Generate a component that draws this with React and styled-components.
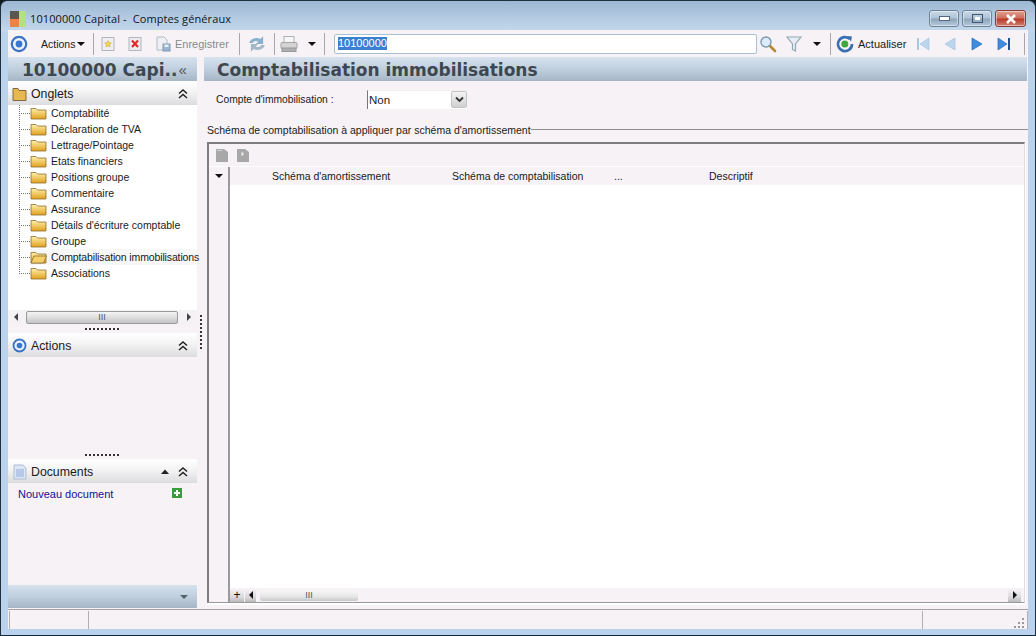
import React from 'react';
import styled, { createGlobalStyle } from 'styled-components';

const GlobalStyle = createGlobalStyle`
  html, body { margin: 0; padding: 0; background: #0d1a22; }
  body { font-family: "Liberation Sans", Arial, sans-serif; font-size: 10.5px; color: #1a1a1a; }
  * { box-sizing: border-box; }
  svg { flex: none; }
`;

const Window = styled.div`
  width: 1036px;
  height: 636px;
  display: flex;
  flex-direction: column;
  overflow: hidden;
  border-radius: 7px 7px 0 0;
  border: 1px solid #20303c;
  border-bottom: 1px solid #102a38;
  background: linear-gradient(to bottom, #9db8d4 0, #c4d8ec 30px, #bcd3ec 31px, #bad2ee 100%);
`;

const TitleBar = styled.div`
  height: 29px;
  flex: none;
  display: flex;
  align-items: center;
  padding: 0 8px 0 9px;
`;

const AppLogo = styled.div`
  width: 16px;
  height: 16px;
  margin-top: 6px;
  display: grid;
  grid-template-columns: 9px 7px;
  grid-template-rows: 8px 8px;
  background: #b4e084;
  > i:nth-child(1) { background: #59564f; }
  > i:nth-child(2) { background: #b4e084; grid-row: span 2; }
  > i:nth-child(3) { background: #ec8248; }
`;

const TitleText = styled.div`
  margin-left: 4px;
  margin-top: 6px;
  font-family: "Open Sans", sans-serif;
  font-size: 11px;
  letter-spacing: 0.1px;
  white-space: pre;
  color: #101418;
`;

const WindowButtons = styled.div`
  margin-left: auto;
  display: flex;
  gap: 3px;
  margin-top: 6px;
  margin-right: 1px;
`;

const WindowButton = styled.div`
  width: ${p => (p.$close ? 31 : 30)}px;
  height: 17px;
  display: flex;
  align-items: center;
  justify-content: center;
  border: 1px solid ${p => (p.$close ? '#8a3a30' : '#6f8398')};
  border-radius: 3px;
  background: ${p => (p.$close
    ? 'linear-gradient(to bottom, #e4a090 0, #d07060 45%, #b83c28 55%, #d08070 100%)'
    : 'linear-gradient(to bottom, #c8d8e8 0, #b0c4d8 45%, #8ea6bc 55%, #b4c8dc 100%)')};
  box-shadow: inset 0 0 0 1px rgba(255, 255, 255, 0.45);
`;

const Toolbar = styled.div`
  height: 26px;
  flex: none;
  margin: 0 7px;
  padding-top: 1px;
  display: flex;
  align-items: center;
  background: #f6f2f6;
`;

const Slot = styled.div`
  width: ${p => p.$w}px;
  flex: none;
  height: 100%;
  display: flex;
  align-items: center;
  justify-content: ${p => p.$start ? 'flex-start' : 'center'};
  padding-left: ${p => p.$pad || 0}px;
  gap: ${p => p.$gap || 0}px;
  color: ${p => p.$muted ? '#8a8a8a' : '#1a1a1a'};
  font-size: ${p => p.$fs || 11}px;
  white-space: nowrap;
`;

const Sep = styled.div`
  width: 1px;
  height: 22px;
  flex: none;
  background: #a4a8ac;
`;

const Caret = styled.span`
  display: inline-block;
  width: 0;
  height: 0;
  border-left: 4px solid transparent;
  border-right: 4px solid transparent;
  border-top: 4px solid #111;
  margin-left: ${p => p.$ml || 0}px;
`;

const SearchInput = styled.div`
  width: 423px;
  height: 20px;
  margin-left: 9px;
  flex: none;
  display: flex;
  align-items: center;
  padding-left: 3px;
  background: #fff;
  border: 1px solid #a8c0d4;
  border-radius: 2px;
  > span { background: #3a7fd0; color: #fff; line-height: 13px; font-size: 11px; }
`;

const Body = styled.div`
  flex: 1;
  min-height: 0;
  margin: 0 7px;
  display: flex;
  background: #f6f2f6;
`;

const Sidebar = styled.aside`
  width: 189px;
  flex: none;
  display: flex;
  flex-direction: column;
`;

const Banner = styled.div`
  height: 24px;
  flex: none;
  margin-top: 1px;
  margin-right: ${p => p.$mr || 0}px;
  padding-top: 1px;
  display: flex;
  align-items: center;
  background: linear-gradient(to bottom, #d6e2ee 0, #c0cfde 50%, #a6b6c6 100%);
`;

const BannerTitle = styled.div`
  font-family: "DejaVu Sans", Verdana, sans-serif;
  font-weight: bold;
  font-size: 17px;
  color: #3d4750;
  white-space: nowrap;
  padding-left: ${p => p.$pad}px;
`;

const Chevrons = styled.span`
  font-size: 15px;
  line-height: 15px;
  color: #555;
  margin-left: 1px;
`;

const SectionHead = styled.div`
  height: 24px;
  flex: none;
  display: flex;
  align-items: center;
  padding: 1px 0 0 4px;
  gap: 4px;
  font-size: 12.3px;
  background: linear-gradient(to bottom, #ffffff 0, #f6f5f6 40%, #dcdcde 100%);
`;

const HeadEnd = styled.div`
  margin-left: auto;
  display: flex;
  align-items: center;
  gap: 9px;
  padding-right: 9px;
`;

const Tree = styled.div`
  height: 205px;
  flex: none;
  background: #fff;
  padding: 0 0 0 11px;
`;

const TreeRow = styled.div`
  height: 16px;
  display: flex;
  align-items: center;
  white-space: nowrap;
  font-size: 10.5px;
  background: ${p => p.$active ? 'linear-gradient(to right, transparent 11px, #f8f7f8 11px)' : 'none'};
`;

const Connector = styled.span`
  width: 11px;
  height: 16px;
  flex: none;
  align-self: flex-start;
  background:
    repeating-linear-gradient(to bottom, #777 0 1px, transparent 1px 2px) 0 0 / 1px ${p => p.$last ? '8px' : '16px'} no-repeat,
    repeating-linear-gradient(to right, #777 0 1px, transparent 1px 2px) 0 8px / 11px 1px no-repeat;
`;

const TreeLabel = styled.span`
  margin-left: 4px;
  flex: none;
  letter-spacing: ${p => p.$tight ? '-0.13px' : 'normal'};
`;

const HScroll = styled.div`
  height: 14px;
  flex: none;
  display: flex;
  align-items: center;
  background: #f4f2f4;
`;

const Thumb = styled.div`
  height: 13px;
  border: 1px solid #9a9a9a;
  border-radius: 2px;
  display: flex;
  align-items: center;
  justify-content: center;
  font-size: 9px;
  color: #555;
  background: linear-gradient(to bottom, #f4f4f4 0, #dedede 50%, #c4c4c4 100%);
  width: 152px;
  margin: 0 9px 0 8px;
`;

const Arrow = styled.span`
  width: 0;
  height: 0;
  border-top: 4px solid transparent;
  border-bottom: 4px solid transparent;
  ${p => p.$dir === 'left'
    ? `border-right: 4px solid ${p.$c || '#444'};`
    : `border-left: 4px solid ${p.$c || '#444'};`}
`;

const Grip = styled.div`
  height: ${p => p.$h}px;
  flex: none;
  display: flex;
  align-items: center;
  justify-content: center;
  &::after {
    content: "";
    width: 36px;
    height: 2px;
    background: repeating-linear-gradient(to right, #333 0 2px, transparent 2px 4px);
  }
`;

const PaneSpace = styled.div`
  height: ${p => p.$h}px;
  flex: none;
`;

const DocRow = styled.div`
  flex: 1;
  display: flex;
  justify-content: space-between;
  padding: 5px 15px 0 10px;
  color: #10109a;
  font-size: 11px;
`;

const SidebarFoot = styled.div`
  height: 23px;
  flex: none;
  margin-bottom: 1px;
  display: flex;
  align-items: center;
  justify-content: flex-end;
  padding-right: 9px;
  background: linear-gradient(to bottom, #d6e2ee 0, #c0cfde 50%, #a6b6c6 100%);
`;

const DownTri = styled.span`
  width: 0;
  height: 0;
  border-left: 4px solid transparent;
  border-right: 4px solid transparent;
  border-top: 4px solid #555f68;
`;

const Gutter = styled.div`
  width: 7px;
  flex: none;
  padding-top: 259px;
  padding-left: 3px;
  &::after {
    content: "";
    display: block;
    width: 2px;
    height: 36px;
    background: repeating-linear-gradient(to bottom, #333 0 2px, transparent 2px 4px);
  }
`;

const Main = styled.main`
  flex: 1;
  min-width: 0;
  display: flex;
  flex-direction: column;
`;

const FormRow = styled.div`
  height: 36px;
  flex: none;
  display: flex;
  align-items: center;
  padding: 0 0 0 12px;
  font-size: 10.3px;
`;

const FormLabel = styled.label`
  width: 151px;
`;

const Select = styled.div`
  width: 100px;
  height: 19px;
  display: flex;
  align-items: center;
  justify-content: space-between;
  padding-left: 1px;
  background: #fff;
  border-left: 1px solid #777;
  border-top: 1px solid #eee;
  > span:first-child { font-size: 11.5px; }
`;

const SelectBtn = styled.span`
  width: 16px;
  height: 17px;
  display: flex;
  align-items: center;
  justify-content: center;
  border: 1px solid #c4c4c4;
  border-radius: 2px;
  background: linear-gradient(to bottom, #f4f4f4, #d0d0d0);
`;

const Group = styled.div`
  height: 23px;
  flex: none;
  padding-left: 3px;
  display: flex;
  align-items: center;
  font-size: 10.5px;
  white-space: nowrap;
  margin-top: 1px;
  &::after {
    content: "";
    flex: 1;
    height: 1px;
    background: #8e8e8e;
  }
`;

const Grid = styled.div`
  flex: 1;
  min-height: 0;
  margin: 1px 3px 6px 3px;
  border-top: 2px solid #7d7d7d;
  border-left: 2px solid #7d7d7d;
  border-bottom: 1px solid #9a9a9a;
  border-right: 1px solid #dcdcdc;
  box-shadow: 0 2px 0 #fff, 1px 0 0 #fff;
  display: flex;
  flex-direction: column;
`;

const GridTools = styled.div`
  height: 23px;
  flex: none;
  display: flex;
  align-items: center;
  padding-left: 6px;
  gap: 7px;
  border-bottom: 1px solid #fff;
`;

const GridHead = styled.div`
  height: 18px;
  flex: none;
  display: flex;
  align-items: center;
  font-size: 10.5px;
`;

const Corner = styled.div`
  width: 21px;
  height: 100%;
  flex: none;
  border-right: 2px solid #9a9a9a;
  display: flex;
  align-items: center;
  padding-left: 6px;
`;

const Col = styled.div`
  width: ${p => p.$w}px;
  flex: none;
  white-space: nowrap;
`;

const GridBody = styled.div`
  flex: 1;
  min-height: 0;
  display: flex;
`;

const RowGutter = styled.div`
  width: 21px;
  height: 100%;
  flex: none;
  border-right: 2px solid #9a9a9a;
`;

const Cells = styled.div`
  flex: 1;
  background: #fff;
`;

const GridFoot = styled.div`
  height: 14px;
  flex: none;
  display: flex;
  align-items: center;
`;

const FootBtn = styled.div`
  width: ${p => p.$w}px;
  margin-left: ${p => p.$ml || 0}px;
  height: 13px;
  flex: none;
  display: flex;
  align-items: center;
  justify-content: center;
  font-size: 12px;
  color: #111;
  background: linear-gradient(to bottom, #f6f2f6 0, #dcdadc 60%, #bcbcbc 100%);
`;

const FootThumb = styled.div`
  width: 98px;
  height: 11px;
  margin-left: 4px;
  border-radius: 2px;
  display: flex;
  align-items: center;
  justify-content: center;
  font-size: 9px;
  color: #555;
  background: linear-gradient(to bottom, #f8f8f8 0, #e6e6e6 60%, #c8c8c8 100%);
`;

const StatusBar = styled.div`
  height: 20px;
  flex: none;
  margin: 0 7px;
  padding: 1px 0 0 1px;
  display: flex;
  background: #f6f2f6;
  border-top: 1px solid #a4a4a4;
  position: relative;
`;

const StatusCell = styled.div`
  width: ${p => p.$w ? `${p.$w}px` : 'auto'};
  flex: ${p => p.$w ? 'none' : 1};
  border-left: 1px solid ${p => p.$first ? '#b0b0b0' : '#f6f2f6'};
  border-right: 1px solid #b0b0b0;
  &:last-child { border-right: 0; }
`;

const ResizeGrip = styled.div`
  position: absolute;
  right: 4px;
  bottom: 1px;
  width: 10px;
  height: 10px;
  line-height: 0;
`;

const BottomFrame = styled.div`
  height: 6px;
  flex: none;
`;

const Folder = ({ open }) => (
  <svg width="17" height="14" viewBox="0 0 17 14">
    <defs>
      <linearGradient id="fy" x1="0" y1="0" x2="0" y2="1">
        <stop offset="0" stopColor="#fff0a8" />
        <stop offset="1" stopColor="#e0a020" />
      </linearGradient>
    </defs>
    <path d="M1 2.5h5l1.5 1.5H16v9H1z" fill="url(#fy)" stroke="#8c7030" strokeWidth="0.8" />
    {open && <path d="M1 13l3-7h12.5l-3 7z" fill="#f6cf68" stroke="#8c7030" strokeWidth="0.8" />}
  </svg>
);

const BigFolder = () => (
  <svg width="15" height="14" viewBox="0 0 15 14">
    <path d="M1 1.5h5l1 2h7v10H1z" fill="#e8b850" stroke="#806840" strokeWidth="1" />
  </svg>
);

const Target = ({ size = 18 }) => (
  <svg width={size} height={size} viewBox="0 0 18 18">
    <circle cx="9" cy="9" r="7.2" fill="#eef2fa" stroke="#3b74c4" strokeWidth="2.2" />
    <circle cx="9" cy="9" r="3.4" fill="#3a78d0" />
  </svg>
);

const DocStar = () => (
  <svg width="16" height="16" viewBox="0 0 16 16">
    <rect x="2" y="1.5" width="12" height="13" fill="#eeeef2" stroke="#b4b4bc" />
    <path d="M8 4.5l1 2.2 2.4.3-1.8 1.6.5 2.4L8 9.8l-2.1 1.2.5-2.4L4.6 7l2.4-.3z" fill="#f2d84c" stroke="#c8a030" strokeWidth=".5" />
  </svg>
);

const DocCross = () => (
  <svg width="16" height="16" viewBox="0 0 16 16">
    <rect x="2" y="1.5" width="12" height="13" fill="#ececf0" stroke="#b4b4bc" />
    <path d="M5 4.5l6 6.5M11 4.5l-6 6.5" stroke="#dc2c2c" strokeWidth="2.2" />
  </svg>
);

const DocSave = () => (
  <svg width="16" height="16" viewBox="0 0 16 16">
    <path d="M2 1h7l3 3v10H2z" fill="#eef0f4" stroke="#b4bcc8" />
    <rect x="8" y="8" width="7" height="7" fill="#9cb4d4" stroke="#8098b8" />
    <rect x="9.5" y="8.5" width="4" height="2.5" fill="#e8eef6" />
  </svg>
);

const Refresh = () => (
  <svg width="20" height="20" viewBox="0 0 18 18">
    <path d="M2 8a6.5 5.5 0 0 1 10-3.5L14.5 2v7H8l2.2-2.2A3.6 3.2 0 0 0 5 8z" fill="#8ab0d0" />
    <path d="M16 10a6.5 5.5 0 0 1-10 3.5L3.5 16V9H10l-2.2 2.2A3.6 3.2 0 0 0 13 10z" fill="#a4b8c8" />
  </svg>
);

const Printer = () => (
  <svg width="20" height="18" viewBox="0 0 20 18">
    <rect x="5" y="1.5" width="10" height="6" fill="#f6f6f6" stroke="#b0b0b0" />
    <rect x="2" y="7.5" width="16" height="6" rx="1" fill="#d4d4d4" stroke="#a4a4a4" />
    <rect x="3" y="13" width="14" height="3.5" fill="#b0b0b0" stroke="#989898" />
  </svg>
);

const Lens = () => (
  <svg width="18" height="18" viewBox="0 0 18 18">
    <path d="M10.5 10.5l5.5 5.5" stroke="#b88a30" strokeWidth="2.6" strokeLinecap="round" />
    <circle cx="7" cy="7" r="5" fill="#dcecfa" stroke="#7d98b0" strokeWidth="1.4" />
  </svg>
);

const Funnel = () => (
  <svg width="16" height="18" viewBox="0 0 16 18">
    <path d="M1 2h14l-5.5 7v7l-3-1.5V9z" fill="#e6eef4" stroke="#92a8b8" strokeWidth="1.2" />
  </svg>
);

const GreenRefresh = () => (
  <svg width="18" height="18" viewBox="0 0 18 18">
    <path d="M14 4.2A7 7 0 1 0 16 9" fill="none" stroke="#3c70b0" strokeWidth="2.6" />
    <path d="M11 1l5 .5-1 5z" fill="#3c70b0" />
    <circle cx="8.8" cy="9" r="3.5" fill="#40a840" />
  </svg>
);

const Nav = ({ d, bar, c }) => (
  <svg width="16" height="16" viewBox="0 0 16 16">
    <path d={d} fill={c} stroke={c === '#bcd6ee' ? '#a4c4e0' : '#2a68b8'} strokeWidth="0.7" />
    {bar && <rect x={bar} y="2" width="2" height="12" fill={c === '#bcd6ee' ? '#a8c8e4' : '#1d4f9c'} />}
  </svg>
);

const DoubleUp = () => (
  <svg width="10" height="10" viewBox="0 0 10 10">
    <path d="M1 4.5L5 1l4 3.5M1 9L5 5.5 9 9" fill="none" stroke="#222" strokeWidth="1.5" />
  </svg>
);

const SingleUp = () => (
  <svg width="8" height="5" viewBox="0 0 8 5">
    <path d="M0 5l4-4.5L8 5z" fill="#222" />
  </svg>
);

const DocIcon = () => (
  <svg width="15" height="16" viewBox="0 0 15 16">
    <path d="M2 1h9l3 3v11H2z" fill="#dce6f6" stroke="#aebcd4" />
    <path d="M4 6h8M4 8h8M4 10h8M4 12h8" stroke="#90a8d8" />
  </svg>
);

const GreenPlus = () => (
  <svg width="10" height="10" viewBox="0 0 10 10">
    <rect width="10" height="10" fill="#3c9c3c" />
    <path d="M5 2v6M2 5h6" stroke="#fff" strokeWidth="2" />
  </svg>
);

const GreyDoc = ({ plus }) => (
  <svg width="14" height="15" viewBox="0 0 14 15">
    <path d="M1 1h8l4 3v10H1z" fill="#a8a8a8" />
    {plus && <path d="M6 4l2 2-2 2-1-1 1-1-1-1z" fill="#f0f0f0" />}
    {!plus && <path d="M2 2h5v1H2z" fill="#d0d0d0" />}
  </svg>
);

const SelectArrow = () => (
  <svg width="9" height="7" viewBox="0 0 9 7">
    <path d="M1 1.5l3.5 3.5L8 1.5" fill="none" stroke="#333" strokeWidth="1.8" />
  </svg>
);

const GripDots = () => (
  <svg width="10" height="10" viewBox="0 0 10 10">
    <g fill="#9a9a9a">
      <rect x="8" y="0" width="2" height="2" />
      <rect x="4" y="4" width="2" height="2" />
      <rect x="8" y="4" width="2" height="2" />
      <rect x="0" y="8" width="2" height="2" />
      <rect x="4" y="8" width="2" height="2" />
      <rect x="8" y="8" width="2" height="2" />
    </g>
  </svg>
);

const tabs = [
  'Comptabilité',
  'Déclaration de TVA',
  'Lettrage/Pointage',
  'Etats financiers',
  'Positions groupe',
  'Commentaire',
  'Assurance',
  "Détails d'écriture comptable",
  'Groupe',
  'Comptabilisation immobilisations',
  'Associations',
];

export default function App() {
  return (
    <>
      <GlobalStyle />
      <Window>
        <TitleBar>
          <AppLogo><i /><i /><i /></AppLogo>
          <TitleText>10100000 Capital -  Comptes généraux</TitleText>
          <WindowButtons>
            <WindowButton>
              <svg width="11" height="5"><rect x=".5" y=".5" width="10" height="4" fill="#fff" stroke="#55677a" /></svg>
            </WindowButton>
            <WindowButton>
              <svg width="11" height="9"><rect x=".5" y=".5" width="10" height="8" fill="none" stroke="#44566a" /><rect x="3" y="3" width="5" height="3" fill="#fff" /></svg>
            </WindowButton>
            <WindowButton $close>
              <svg width="12" height="10"><path d="M2 1l8 8M10 1l-8 8" stroke="#fff" strokeWidth="2.6" /></svg>
            </WindowButton>
          </WindowButtons>
        </TitleBar>

        <Toolbar>
          <Slot $w={21}><Target /></Slot>
          <Slot $w={64} $start $pad={12} $fs={10.5}>Actions<Caret $ml={2} /></Slot>
          <Sep />
          <Slot $w={28}><DocStar /></Slot>
          <Slot $w={25}><DocCross /></Slot>
          <Slot $w={92} $start $pad={8} $gap={4} $muted><DocSave />Enregistrer</Slot>
          <Sep />
          <Slot $w={34}><Refresh /></Slot>
          <Sep />
          <Slot $w={49} $start $pad={4}><Printer /><Caret $ml={9} /></Slot>
          <Sep />
          <SearchInput><span>10100000</span></SearchInput>
          <Slot $w={22}><Lens /></Slot>
          <Slot $w={51} $start $pad={7}><Funnel /><Caret $ml={11} /></Slot>
          <Sep />
          <Slot $w={27}><GreenRefresh /></Slot>
          <Slot $w={51} $start>Actualiser</Slot>
          <Slot $w={27}><Nav c="#bcd6ee" d="M14 2v12L5 8z" bar="2" /></Slot>
          <Slot $w={27}><Nav c="#bcd6ee" d="M13 2v12L3 8z" /></Slot>
          <Slot $w={27}><Nav c="#3f8be0" d="M3 2v12l10-6z" /></Slot>
          <Slot $w={27}><Nav c="#3f8be0" d="M2 2v12l9-6z" bar="12" /></Slot>
          <Slot $w={7} />
          <Sep />
        </Toolbar>

        <Body>
          <Sidebar>
            <Banner>
              <BannerTitle $pad={14}>10100000 Capi..</BannerTitle>
              <Chevrons>«</Chevrons>
            </Banner>
            <SectionHead>
              <BigFolder />Onglets
              <HeadEnd><DoubleUp /></HeadEnd>
            </SectionHead>
            <Tree>
              {tabs.map((name, i) => (
                <TreeRow key={name} $active={i === 9}>
                  <Connector $last={i === tabs.length - 1} />
                  <Folder open={i === 9} />
                  <TreeLabel $tight={i === 9}>{name}</TreeLabel>
                </TreeRow>
              ))}
            </Tree>
            <HScroll>
              <Slot $w={6} />
              <Arrow $dir="left" />
              <Thumb>III</Thumb>
              <Arrow $dir="right" />
            </HScroll>
            <Grip $h={9} />
            <SectionHead>
              <Target size={15} />Actions
              <HeadEnd><DoubleUp /></HeadEnd>
            </SectionHead>
            <PaneSpace $h={93} />
            <Grip $h={9} />
            <SectionHead>
              <DocIcon />Documents
              <HeadEnd><SingleUp /><DoubleUp /></HeadEnd>
            </SectionHead>
            <DocRow>
              <span>Nouveau document</span>
              <GreenPlus />
            </DocRow>
            <SidebarFoot><DownTri /></SidebarFoot>
          </Sidebar>

          <Gutter />

          <Main>
            <Banner $mr={1}>
              <BannerTitle $pad={13}>Comptabilisation immobilisations</BannerTitle>
            </Banner>
            <FormRow>
              <FormLabel>Compte d'immobilisation :</FormLabel>
              <Select>
                <span>Non</span>
                <SelectBtn><SelectArrow /></SelectBtn>
              </Select>
            </FormRow>
            <Group>Schéma de comptabilisation à appliquer par schéma d'amortissement</Group>
            <Grid>
              <GridTools>
                <GreyDoc />
                <GreyDoc plus />
              </GridTools>
              <GridHead>
                <Corner><Caret /></Corner>
                <Col $w={42} />
                <Col $w={180}>Schéma d'amortissement</Col>
                <Col $w={162}>Schéma de comptabilisation</Col>
                <Col $w={95}>...</Col>
                <Col $w={80}>Descriptif</Col>
              </GridHead>
              <GridBody>
                <RowGutter />
                <Cells />
              </GridBody>
              <GridFoot>
                <RowGutter />
                <FootBtn $w={14}>+</FootBtn>
                <FootBtn $w={11} $ml={1}><Arrow $dir="left" $c="#111" /></FootBtn>
                <FootThumb>III</FootThumb>
                <Slot $w={650} />
                <FootBtn $w={13}><Arrow $dir="right" $c="#111" /></FootBtn>
              </GridFoot>
            </Grid>
          </Main>
        </Body>

        <StatusBar>
          <StatusCell $w={80} $first />
          <StatusCell $w={834} />
          <StatusCell />
          <ResizeGrip><GripDots /></ResizeGrip>
        </StatusBar>
        <BottomFrame />
      </Window>
    </>
  );
}
